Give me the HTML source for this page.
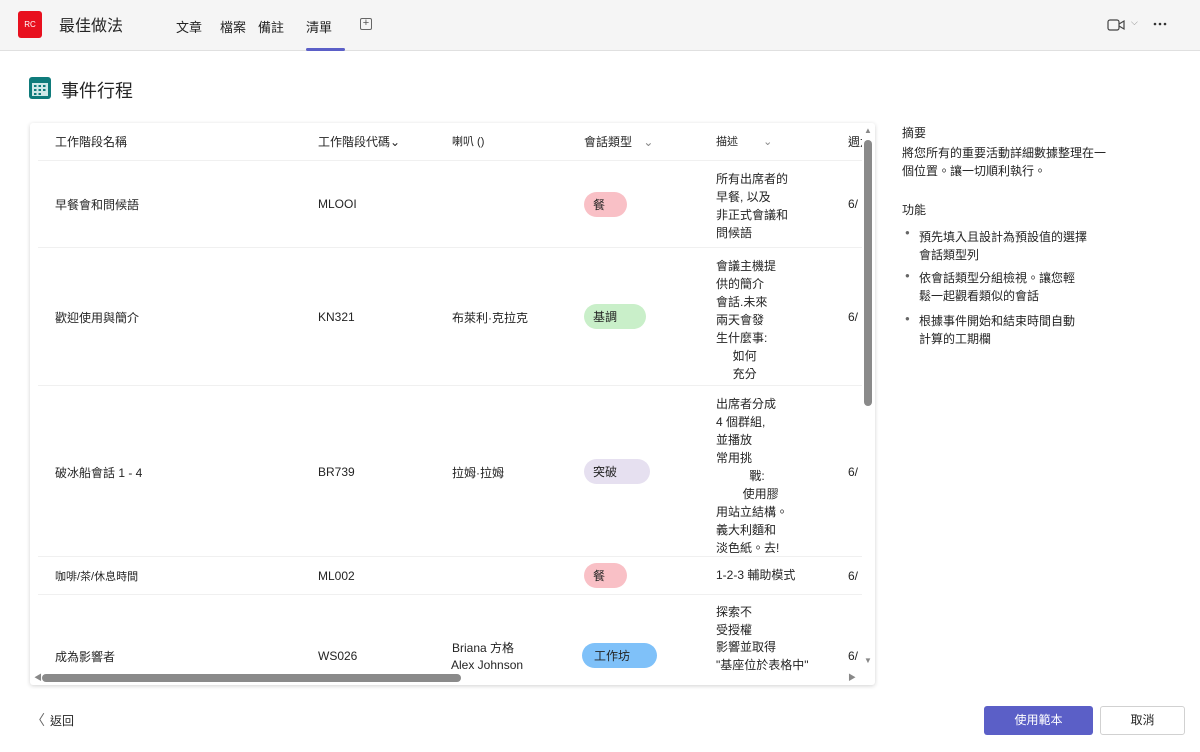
<!DOCTYPE html>
<html><head><meta charset="utf-8"><style>
*{margin:0;padding:0;box-sizing:border-box}
body{width:1200px;height:752px;background:#fff;font-family:"Liberation Sans","Noto Sans CJK TC",sans-serif;color:#242424;position:relative;overflow:hidden;font-size:12px}
.a{position:absolute;white-space:nowrap}
.top{position:absolute;left:0;top:0;width:1200px;height:51px;background:#f5f5f5;border-bottom:1px solid #e0e0e0}
.pill{position:absolute;height:25px;border-radius:13px;padding-left:9px;line-height:26px;font-size:12px}
.hr{position:absolute;left:38px;width:826px;height:1px;background:#f0f0f0}
.d{position:absolute;left:716px;line-height:18px;font-size:12px;white-space:nowrap}
</style></head><body>
<div class="top">
 <div class="a" style="left:18px;top:11px;width:24px;height:27px;background:#e8101e;border-radius:3px;color:#fff;font-size:8px;line-height:27px;text-align:center">RC</div>
 <div class="a" style="left:59px;top:12px;font-size:16px">最佳做法</div>
 <div class="a" style="left:176px;top:17px;font-size:13px">文章</div>
 <div class="a" style="left:220px;top:17px;font-size:13px">檔案</div>
 <div class="a" style="left:258px;top:17px;font-size:13px">備註</div>
 <div class="a" style="left:306px;top:17px;font-size:13px">清單</div>
 <div class="a" style="left:306px;top:48px;width:39px;height:3px;background:#5b5fc7;border-radius:2px"></div>
 <div class="a" style="left:360px;top:18px;width:12px;height:12px;border:1px solid #666;border-radius:2px;font-size:11px;line-height:9px;text-align:center;color:#555">+</div>
 <svg class="a" style="left:1107px;top:18px" width="20" height="14" viewBox="0 0 20 14"><rect x="1" y="2" width="11" height="10" rx="2" fill="none" stroke="#444" stroke-width="1.2"/><path d="M12 6l5-3v8l-5-3" fill="none" stroke="#444" stroke-width="1.2"/></svg>
 <div class="a" style="left:1131px;top:17px;font-size:9px;color:#888">⌵</div>
 <svg class="a" style="left:1153px;top:22px" width="14" height="4"><circle cx="2" cy="2" r="1.3" fill="#333"/><circle cx="7" cy="2" r="1.3" fill="#333"/><circle cx="12" cy="2" r="1.3" fill="#333"/></svg>
</div>
<svg class="a" style="left:29px;top:76px" width="22" height="23" viewBox="0 0 22 23"><rect x="0" y="1" width="22" height="22" rx="3" fill="#0f7b7b"/><rect x="3" y="7" width="16" height="13" fill="#cfe8e8"/><g fill="#0f7b7b"><rect x="5" y="9" width="2.5" height="2"/><rect x="9.5" y="9" width="2.5" height="2"/><rect x="14" y="9" width="2.5" height="2"/><rect x="5" y="13" width="2.5" height="2"/><rect x="9.5" y="13" width="2.5" height="2"/><rect x="14" y="13" width="2.5" height="2"/><rect x="5" y="17" width="2.5" height="2"/><rect x="9.5" y="17" width="2.5" height="2"/></g></svg>
<div class="a" style="left:61px;top:77px;font-size:18px">事件行程</div>

<div class="a" style="left:30px;top:123px;width:845px;height:562px;background:#fff;box-shadow:0 1px 4px rgba(0,0,0,.18);border-radius:3px;overflow:hidden">
</div>
<div class="a" style="left:55px;top:133px">工作階段名稱</div>
<div class="a" style="left:318px;top:133px">工作階段代碼⌄</div>
<div class="a" style="left:452px;top:133px;font-size:11px">喇叭 ()</div>
<div class="a" style="left:584px;top:133px">會話類型 <span style="color:#888;margin-left:8px">⌄</span></div>
<div class="a" style="left:716px;top:133px;font-size:11px">描述 <span style="color:#888;margin-left:22px">⌄</span></div>
<div class="a" style="left:848px;top:133px">週六</div>
<div class="hr" style="top:160px"></div>
<div class="hr" style="top:247px"></div>
<div class="hr" style="top:385px"></div>
<div class="hr" style="top:556px"></div>
<div class="hr" style="top:594px"></div>

<div class="a" style="left:55px;top:196px">早餐會和問候語</div>
<div class="a" style="left:318px;top:197px">MLOOI</div>
<div class="pill" style="left:584px;top:192px;width:43px;background:#f9c0c6">餐</div>
<div class="d" style="top:170px">所有出席者的<br>早餐, 以及<br>非正式會議和<br>問候語</div>
<div class="a" style="left:848px;top:197px">6/</div>

<div class="a" style="left:55px;top:309px">歡迎使用與簡介</div>
<div class="a" style="left:318px;top:310px">KN321</div>
<div class="a" style="left:452px;top:309px">布萊利·克拉克</div>
<div class="pill" style="left:584px;top:304px;width:62px;background:#c9efc9">基調</div>
<div class="d" style="top:257px">會議主機提<br>供的簡介<br>會話.未來<br>兩天會發<br>生什麼事:<br>&nbsp;&nbsp;&nbsp;&nbsp;&nbsp;如何<br>&nbsp;&nbsp;&nbsp;&nbsp;&nbsp;充分</div>
<div class="a" style="left:848px;top:310px">6/</div>

<div class="a" style="left:55px;top:464px">破冰船會話 1 - 4</div>
<div class="a" style="left:318px;top:465px">BR739</div>
<div class="a" style="left:452px;top:464px">拉姆·拉姆</div>
<div class="pill" style="left:584px;top:459px;width:66px;background:#e6e0f0">突破</div>
<div class="d" style="top:395px">出席者分成<br>4 個群組,<br>並播放<br>常用挑<br>&nbsp;&nbsp;&nbsp;&nbsp;&nbsp;&nbsp;&nbsp;&nbsp;&nbsp;&nbsp;戰:<br>&nbsp;&nbsp;&nbsp;&nbsp;&nbsp;&nbsp;&nbsp;&nbsp;使用膠<br>用站立結構。<br>義大利麵和<br>淡色紙。去!</div>
<div class="a" style="left:848px;top:465px">6/</div>

<div class="a" style="left:55px;top:568px;font-size:11px">咖啡/茶/休息時間</div>
<div class="a" style="left:318px;top:569px">ML002</div>
<div class="pill" style="left:584px;top:563px;width:43px;background:#f9c0c6">餐</div>
<div class="d" style="top:566px">1-2-3 輔助模式</div>
<div class="a" style="left:848px;top:569px">6/</div>

<div class="a" style="left:55px;top:648px">成為影響者</div>
<div class="a" style="left:318px;top:649px">WS026</div>
<div class="a" style="left:452px;top:639px">Briana 方格</div>
<div class="a" style="left:451px;top:658px">Alex Johnson</div>
<div class="pill" style="left:582px;top:643px;width:75px;background:#7fc1f9;padding-left:12px">工作坊</div>
<div class="d" style="top:604px;line-height:17.5px">探索不<br>受授權<br>影響並取得<br>"基座位於表格中"</div>
<div class="a" style="left:848px;top:649px">6/</div>

<div class="a" style="left:862px;top:124px;width:12px;height:546px;background:#fff"></div>
<div class="a" style="left:864px;top:140px;width:8px;height:266px;background:#8a8a8a;border-radius:4px"></div>
<div class="a" style="left:864px;top:126px;font-size:8px;color:#888">▲</div>
<div class="a" style="left:864px;top:656px;font-size:8px;color:#888">▼</div>
<div class="a" style="left:31px;top:672px;width:843px;height:12px;background:#fff"></div>
<div class="a" style="left:42px;top:674px;width:419px;height:8px;background:#8a8a8a;border-radius:4px"></div>
<div class="a" style="left:34px;top:672px;font-size:8px;color:#888">◀</div>
<div class="a" style="left:848px;top:672px;font-size:8px;color:#888">▶</div>

<div class="a" style="left:902px;top:124px">摘要</div>
<div class="a" style="left:902px;top:144px;line-height:18px">將您所有的重要活動詳細數據整理在一<br>個位置。讓一切順利執行。</div>
<div class="a" style="left:902px;top:201px">功能</div>
<div class="a" style="left:905px;top:228px;font-size:8px;color:#666">●</div>
<div class="a" style="left:919px;top:228px;line-height:18px">預先填入且設計為預設值的選擇<br>會話類型列</div>
<div class="a" style="left:905px;top:271px;font-size:8px;color:#666">●</div>
<div class="a" style="left:919px;top:269px;line-height:18px">依會話類型分組檢視。讓您輕<br>鬆一起觀看類似的會話</div>
<div class="a" style="left:905px;top:314px;font-size:8px;color:#666">●</div>
<div class="a" style="left:919px;top:312px;line-height:18px">根據事件開始和結束時間自動<br>計算的工期欄</div>

<div class="a" style="left:31px;top:710px;font-size:14px;color:#666">〈</div>
<div class="a" style="left:50px;top:712px">返回</div>
<div class="a" style="left:984px;top:706px;width:109px;height:29px;background:#5b5fc7;border-radius:3px;color:#fff;text-align:center;line-height:29px">使用範本</div>
<div class="a" style="left:1100px;top:706px;width:85px;height:29px;border:1px solid #d1d1d1;border-radius:3px;text-align:center;line-height:27px">取消</div>
</body></html>
